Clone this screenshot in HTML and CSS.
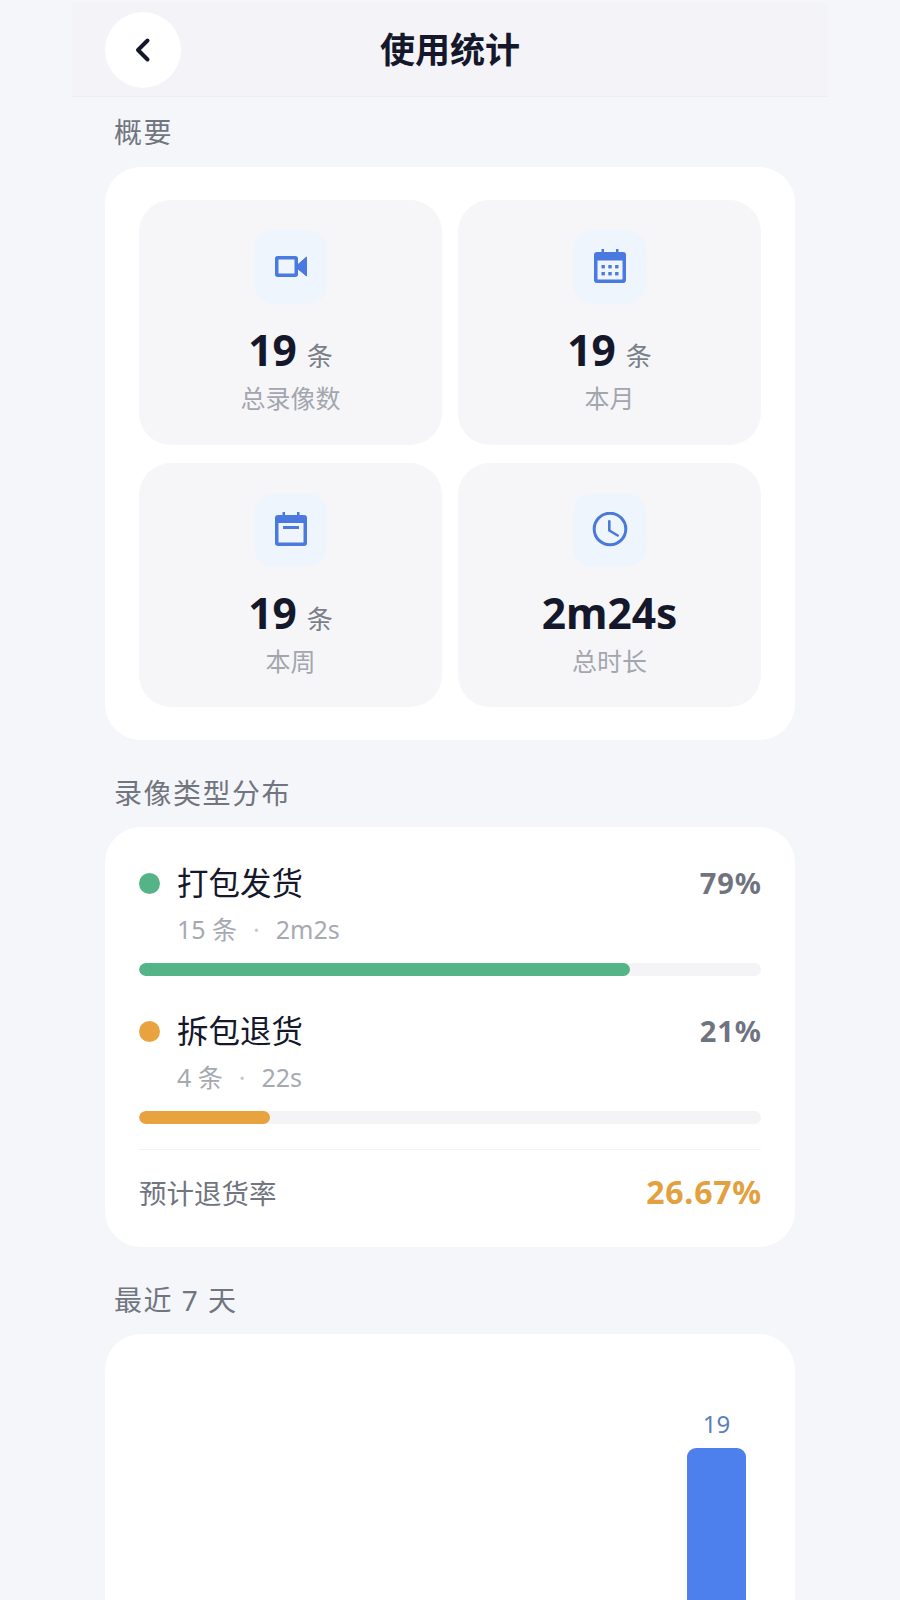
FILE: index.html
```html
<!DOCTYPE html>
<html lang="zh">
<head>
<meta charset="utf-8">
<title>使用统计</title>
<link rel="stylesheet" href="styles.css">
</head>
<body>
<div class="page">
  <header class="header">
    <button class="back" aria-label="返回">
      <svg width="30" height="30" viewBox="0 0 30 30"><path d="M19.500 5.500 L10 15 L19.500 24.500" fill="none" stroke="#14182a" stroke-width="4" stroke-linecap="round" stroke-linejoin="round"/></svg>
    </button>
    <h1 class="title">使用统计</h1>
  </header>

  <main class="main">
    <h2 class="section first">概要</h2>
    <section class="card summary">
      <div class="cell">
        <div class="icon-box">
          <svg width="36" height="36" viewBox="0 0 36 36"><rect x="3.750" y="8.750" width="19.500" height="17.500" rx="1" fill="none" stroke="#4a79df" stroke-width="3.500"/><path d="M25 15.500 L33.500 8 V27 L25 20 Z" fill="#4a79df" stroke="#4a79df" stroke-width="1" stroke-linejoin="round"/></svg>
        </div>
        <div class="value">19<span class="unit">条</span></div>
        <div class="label">总录像数</div>
      </div>
      <div class="cell">
        <div class="icon-box">
          <svg width="36" height="36" viewBox="0 0 36 36"><path d="M5 3 H9.500 V0 H12 V3 H24 V0 H26.500 V3 H31 a3 3 0 0 1 3 3 V31 a3 3 0 0 1 -3 3 H5 a3 3 0 0 1 -3 -3 V6 a3 3 0 0 1 3 -3z" fill="#4a79df"/><rect x="5.500" y="11.500" width="25" height="19" fill="#f0f5fd"/><g fill="#4a79df"><rect x="9.500" y="16" width="3.400" height="3.400"/><rect x="16.300" y="16" width="3.400" height="3.400"/><rect x="23.100" y="16" width="3.400" height="3.400"/><rect x="9.500" y="23" width="3.400" height="3.400"/><rect x="16.300" y="23" width="3.400" height="3.400"/><rect x="23.100" y="23" width="3.400" height="3.400"/></g></svg>
        </div>
        <div class="value">19<span class="unit">条</span></div>
        <div class="label">本月</div>
      </div>
      <div class="cell">
        <div class="icon-box">
          <svg width="36" height="36" viewBox="0 0 36 36"><path d="M5 3 H9.500 V0 H12 V3 H24 V0 H26.500 V3 H31 a3 3 0 0 1 3 3 V31 a3 3 0 0 1 -3 3 H5 a3 3 0 0 1 -3 -3 V6 a3 3 0 0 1 3 -3z" fill="#4a79df"/><rect x="5.500" y="11" width="25" height="19.500" fill="#f0f5fd"/><rect x="10" y="14" width="16" height="3" fill="#4a79df"/></svg>
        </div>
        <div class="value">19<span class="unit">条</span></div>
        <div class="label">本周</div>
      </div>
      <div class="cell">
        <div class="icon-box">
          <svg width="36" height="36" viewBox="0 0 36 36"><circle cx="18" cy="17" r="15.800" fill="none" stroke="#4a79d8" stroke-width="3"/><path d="M17.300 9.200 V18.500 L25.700 23.500" fill="none" stroke="#4a79d8" stroke-width="2.600" stroke-linecap="round" stroke-linejoin="round"/></svg>
        </div>
        <div class="value">2m24s</div>
        <div class="label">总时长</div>
      </div>
    </section>

    <h2 class="section">录像类型分布</h2>
    <section class="card dist">
      <div class="type">
        <div class="type-head">
          <span class="dot green"></span>
          <span class="type-name">打包发货</span>
          <span class="pct">79%</span>
        </div>
        <div class="meta"><span>15 条</span><span class="sep">·</span><span>2m2s</span></div>
        <div class="track"><div class="fill green" style="width:79%"></div></div>
      </div>
      <div class="type">
        <div class="type-head">
          <span class="dot orange"></span>
          <span class="type-name">拆包退货</span>
          <span class="pct">21%</span>
        </div>
        <div class="meta"><span>4 条</span><span class="sep">·</span><span>22s</span></div>
        <div class="track"><div class="fill orange" style="width:21%"></div></div>
      </div>
      <div class="rate">
        <span class="rate-label">预计退货率</span>
        <span class="rate-value">26.67%</span>
      </div>
    </section>

    <h2 class="section">最近 7 天</h2>
    <section class="card chart">
      <div class="bar-col">
        <span class="bar-num">19</span>
        <div class="bar"></div>
      </div>
    </section>
  </main>
</div>
</body>
</html>
```

FILE: styles.css
```css
* { box-sizing: border-box; }
html, body { margin: 0; padding: 0; }
body {
  background: #f5f6f9;
  font-family: "Noto Sans", "Noto Sans CJK SC", sans-serif;
  color: #14182a;
}
.page { height: 1600px; overflow: hidden; }
.header {
  width: 756px;
  height: 94px;
  margin: 3px auto 0;
  padding-left: 33px;
  display: flex;
  align-items: center;
  position: relative;
  background: #f3f3f8;
  border-bottom: 1px solid #eeeef2;
}
.back {
  width: 76px;
  height: 76px;
  padding: 0;
  border: 0;
  border-radius: 50%;
  background: #fff;
  display: flex;
  align-items: center;
  justify-content: center;
}
.title {
  position: absolute;
  left: 0;
  right: 0;
  margin: 0;
  text-align: center;
  font-size: 35px;
  line-height: 48px;
  font-weight: 700;
}
.main { padding: 0 105px; }
.section {
  margin: 33px 0 14px 9px;
  font-size: 28px;
  line-height: 40px;
  font-weight: 400;
  color: #71757f;
  letter-spacing: 1.500px;
}
.section.first { margin-top: 15px; margin-bottom: 15px; }
.card { background: #fff; border-radius: 36px; padding: 33px 34px; }
.summary {
  display: grid;
  grid-template-columns: 1fr 1fr;
  column-gap: 16px;
  row-gap: 18px;
}
.cell {
  height: 244.500px;
  border-radius: 32px;
  background: #f6f6f9;
  padding-top: 30px;
  display: flex;
  flex-direction: column;
  align-items: center;
}
.icon-box {
  width: 73px;
  height: 74px;
  border-radius: 20px;
  background: #eff5fd;
  display: flex;
  align-items: center;
  justify-content: center;
}
.value {
  height: 54px;
  margin-top: 19px;
  font-size: 42.500px;
  line-height: 54px;
  font-weight: 700;
  color: #14182a;
}
.unit {
  margin-left: 10px;
  font-size: 26px;
  font-weight: 400;
  color: #7b7f88;
}
.label {
  margin-top: 4px;
  font-size: 25px;
  line-height: 34px;
  color: #a3a6ae;
}
.dist { padding-top: 36px; padding-bottom: 0; height: 420px; }
.type { margin-bottom: 35px; }
.type-head { display: flex; align-items: center; height: 40px; }
.dot { width: 21px; height: 21px; border-radius: 50%; margin-right: 17px; }
.green { background: #55b487; }
.orange { background: #e9a33e; }
.type-name { flex: 1; font-size: 31.500px; line-height: 40px; color: #14182a; }
.pct { font-size: 29px; line-height: 40px; font-weight: 700; color: #6f7480; letter-spacing: 1px; margin-right: -1px; }
.meta {
  display: flex;
  height: 36px;
  margin: 8px 0 0 38px;
  font-size: 25px;
  line-height: 36px;
  color: #a6a9b2;
}
.sep { margin: 0 16px; color: #c6c8ce; }
.track {
  height: 13px;
  margin-top: 16px;
  border-radius: 7px;
  background: #f4f4f7;
  overflow: hidden;
}
.fill { height: 100%; border-radius: 7px; }
.rate {
  display: flex;
  justify-content: space-between;
  align-items: center;
  height: 84px;
  margin-top: -10px;
  border-top: 1px solid #f3f3f6;
}
.rate-label { font-size: 27.500px; color: #71757f; }
.rate-value { font-size: 32px; font-weight: 700; color: #e2a03f; letter-spacing: .8px; margin-right: -1px; }
.chart {
  height: 400px;
  display: flex;
  justify-content: flex-end;
  padding: 75px 49px 0 0;
}
.bar-col { display: flex; flex-direction: column; align-items: center; width: 59px; }
.bar-num { font-size: 24px; line-height: 30px; color: #5b7fb8; margin-bottom: 9px; }
.bar { width: 59px; height: 300px; background: #4d80ec; border-radius: 9px 9px 0 0; }
```
